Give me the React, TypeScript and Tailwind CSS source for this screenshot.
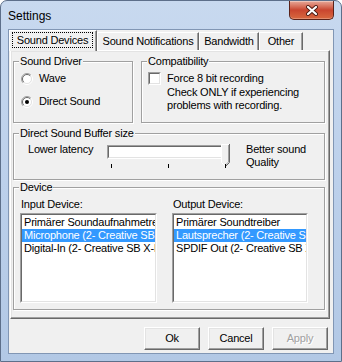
import React from "react";

const sunkenOuter = "border border-t-[#a0a0a0] border-l-[#a0a0a0] border-r-white border-b-white";
const sunkenInner = "border border-t-[#696969] border-l-[#696969] border-r-[#e3e3e3] border-b-[#e3e3e3]";
const raised =
  "border border-t-white border-l-white border-r-[#696969] border-b-[#696969] shadow-[inset_-1px_-1px_0_#a0a0a0,inset_1px_1px_0_#e3e3e3]";

const Radio = ({ checked }: { checked?: boolean }) => (
  <svg width="12" height="12" viewBox="0 0 12 12" className="shrink-0">
    <circle cx="6" cy="6" r="4.5" fill="#fff" />
    <path d="M2.1 9.9 A5.5 5.5 0 0 1 9.9 2.1" stroke="#a0a0a0" fill="none" />
    <path d="M9.9 2.1 A5.5 5.5 0 0 1 2.1 9.9" stroke="#fff" fill="none" />
    <path d="M2.8 9.2 A4.5 4.5 0 0 1 9.2 2.8" stroke="#696969" fill="none" />
    <path d="M9.2 2.8 A4.5 4.5 0 0 1 2.8 9.2" stroke="#e3e3e3" fill="none" />
    {checked && <circle cx="6" cy="6" r="2" fill="#000" />}
  </svg>
);

const Checkbox = () => (
  <div className={`h-[13px] w-[13px] shrink-0 ${sunkenOuter}`}>
    <div className={`h-full w-full bg-white ${sunkenInner}`} />
  </div>
);

const Group = ({ title, className, children }: { title: string; className?: string; children?: React.ReactNode }) => (
  <fieldset className={`border border-[#a0a0a0] shadow-[inset_1px_1px_0_#fff,1px_1px_0_#fff] ${className}`}>
    <legend className="ml-[5px] bg-[#f0f0f0] px-[1px] leading-[13px]">{title}</legend>
    {children}
  </fieldset>
);

const ListBox = ({ items, selected }: { items: string[]; selected: number }) => (
  <div className={`h-[90px] ${sunkenOuter}`}>
    <div className={`h-full overflow-hidden bg-white pt-[1px] ${sunkenInner}`}>
      {items.map((item, i) => (
        <div
          key={item}
          className={`h-[13px] overflow-hidden whitespace-nowrap px-[2px] leading-[13px] ${i === selected ? "bg-[#3399ff] text-white" : ""}`}
        >
          {item}
        </div>
      ))}
    </div>
  </div>
);

const Button = ({ label, disabled }: { label: string; disabled?: boolean }) => (
  <button
    className={`flex h-[23px] w-[56px] items-center justify-center bg-[#f0f0f0] leading-[13px] ${raised} ${
      disabled ? "text-[#a0a0a0] [text-shadow:1px_1px_0_#fff]" : "text-black"
    }`}
  >
    {label}
  </button>
);

const Tab = ({ label, width }: { label: string; width: string }) => (
  <div
    className={`flex h-[18px] items-center justify-center border-l border-t border-r border-l-white border-t-white border-r-[#696969] shadow-[inset_-1px_0_0_#a0a0a0] ${width}`}
  >
    {label}
  </div>
);

export default function App() {
  return (
    <div className="h-[362px] w-[342px] rounded-t-[7px] border border-[#5d6f8a] bg-linear-to-b from-[#c8d9ef] via-[#bcd0eb] to-[#b2c8e5] font-['Liberation_Sans',Arial,sans-serif] text-[11px] tracking-[-0.2px] text-black">
      {/* title bar */}
      <div className="flex h-[28px] items-start justify-between">
        <span className="ml-[7px] mt-[8px] text-[12px] leading-[14px] tracking-normal">Settings</span>
        <div className="mr-[7px] flex h-[19px] w-[45px] items-center justify-center rounded-b-[5px] border border-t-0 border-[#5a2219] bg-linear-to-b from-[#e6a899] via-[#c9452f] to-[#d8683f] shadow-[inset_0_1px_0_rgba(255,255,255,0.35),inset_0_-1px_0_rgba(255,255,255,0.25)]">
          <svg width="12" height="11" viewBox="0 0 12 11">
            <path d="M2 2 L10 9 M10 2 L2 9" stroke="#4a1a12" strokeWidth="4" strokeLinecap="round" />
            <path d="M2 2 L10 9 M10 2 L2 9" stroke="#fff" strokeWidth="2.2" strokeLinecap="round" />
          </svg>
        </div>
      </div>

      {/* client */}
      <div className="ml-[7px] flex h-[325px] w-[326px] flex-col border border-[#8196b4] bg-[#f0f0f0]">
        {/* tabs */}
        <div className="relative z-10 flex h-[20px] items-end">
          <div className="mb-[-1px] flex h-[21px] w-[88px] border-l border-t border-r border-l-white border-t-white border-r-[#696969] bg-[#f0f0f0] pb-[3px] pl-[2px] pr-[3px] pt-[1px] shadow-[inset_-1px_0_0_#a0a0a0]">
            <div className="flex flex-1 items-center justify-center border border-dotted border-black">Sound Devices</div>
          </div>
          <Tab label="Sound Notifications" width="w-[102px]" />
          <Tab label="Bandwidth" width="w-[60px]" />
          <Tab label="Other" width="w-[44px]" />
        </div>

        {/* panel */}
        <div className={`ml-[1px] flex h-[269px] w-[320px] flex-col bg-[#f0f0f0] pl-[2px] pt-[4px] ${raised}`}>
          <div className="flex gap-[8px]">
            <Group title="Sound Driver" className="h-[68px] w-[120px]">
              <div className="flex flex-col pl-[7px]">
                <div className="mt-[4px] flex h-[13px] items-center gap-[6px]">
                  <Radio />
                  <span className="leading-[13px]">Wave</span>
                </div>
                <div className="mt-[10px] flex h-[13px] items-center gap-[6px]">
                  <Radio checked />
                  <span className="leading-[13px]">Direct Sound</span>
                </div>
              </div>
            </Group>
            <Group title="Compatibility" className="h-[68px] w-[184px]">
              <div className="flex flex-col pl-[6px]">
                <div className="mt-[4px] flex h-[13px] items-center gap-[6px]">
                  <Checkbox />
                  <span className="leading-[13px]">Force 8 bit recording</span>
                </div>
                <div className="mt-[1px] pl-[19px] leading-[13px]">
                  Check ONLY if experiencing
                  <br />
                  problems with recording.
                </div>
              </div>
            </Group>
          </div>

          <Group title="Direct Sound Buffer size" className="mt-[4px] h-[53px] w-[312px]">
            <div className="mt-[3px] flex items-start pl-[14px]">
              <span className="w-[79px] leading-[13px]">Lower latency</span>
              <div className="relative mt-[2px] h-[24px] w-[124px]">
                <div className={`h-[14px] w-[122px] ${sunkenOuter}`}>
                  <div className={`h-full w-full bg-white ${sunkenInner}`} />
                </div>
                <svg width="10" height="24" viewBox="0 0 10 24" className="absolute left-[114px] top-[-1px]">
                  <path d="M0.5 0.5 H8.5 V18.5 L4.5 22.5 L0.5 18.5 Z" fill="#f0f0f0" />
                  <path d="M0.5 18.5 V0.5 H8" stroke="#fff" fill="none" />
                  <path d="M0.5 18.5 L4.5 22.5" stroke="#fff" fill="none" />
                  <path d="M8.5 0 V18.5 L4.5 22.5" stroke="#696969" fill="none" />
                  <path d="M7.5 1 V18 L4.5 21" stroke="#a0a0a0" fill="none" />
                </svg>
                <div className="absolute left-[4px] top-[19px] h-[4px] w-[1px] bg-black" />
                <div className="absolute left-[61px] top-[19px] h-[4px] w-[1px] bg-black" />
                <div className="absolute left-[118px] top-[19px] h-[4px] w-[1px] bg-black" />
              </div>
              <div className="ml-[15px] leading-[13px]">
                Better sound
                <br />
                Quality
              </div>
            </div>
          </Group>

          <Group title="Device" className="mt-[1px] h-[129px] w-[312px]">
            <div className="mt-[4px] flex gap-[15px] pl-[6px]">
              <div className="flex w-[137px] flex-col">
                <span className="pl-[1px] leading-[13px]">Input Device:</span>
                <div className="mt-[2px]">
                  <ListBox
                    selected={1}
                    items={[
                      "Primärer Soundaufnahmetreiber",
                      "Microphone (2- Creative SB X-Fi)",
                      "Digital-In (2- Creative SB X-Fi)",
                    ]}
                  />
                </div>
              </div>
              <div className="flex w-[136px] flex-col">
                <span className="pl-[1px] leading-[13px]">Output Device:</span>
                <div className="mt-[2px]">
                  <ListBox
                    selected={1}
                    items={[
                      "Primärer Soundtreiber",
                      "Lautsprecher (2- Creative SB X-Fi)",
                      "SPDIF Out (2- Creative SB X-Fi)",
                    ]}
                  />
                </div>
              </div>
            </div>
          </Group>
        </div>

        {/* buttons */}
        <div className="mt-[8px] flex justify-end gap-[8px] pr-[5px]">
          <Button label="Ok" />
          <Button label="Cancel" />
          <Button label="Apply" disabled />
        </div>
      </div>
    </div>
  );
}
